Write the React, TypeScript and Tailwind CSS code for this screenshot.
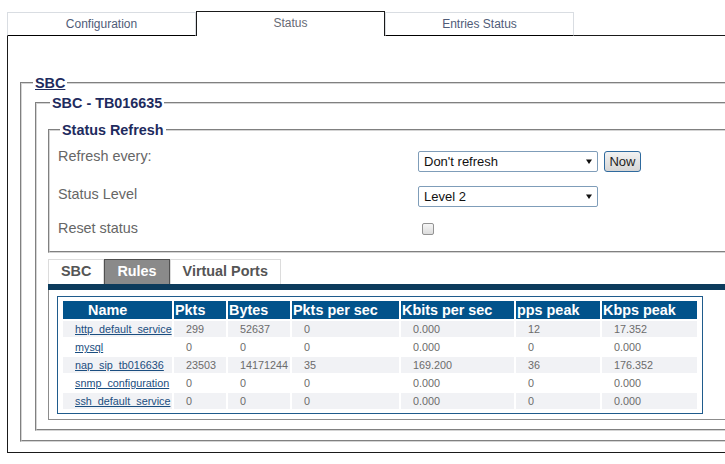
const rows = [
  ['http_default_service', '299', '52637', '0', '0.000', '12', '17.352'],
  ['mysql', '0', '0', '0', '0.000', '0', '0.000'],
  ['nap_sip_tb016636', '23503', '14171244', '35', '169.200', '36', '176.352'],
  ['snmp_configuration', '0', '0', '0', '0.000', '0', '0.000'],
  ['ssh_default_service', '0', '0', '0', '0.000', '0', '0.000'],
]

const headers = ['Pkts', 'Bytes', 'Pkts per sec', 'Kbits per sec', 'pps peak', 'Kbps peak']

function FakeSelect({ value }: { value: string }) {
  return (
    <div className="flex h-[21px] w-[180px] items-center justify-between rounded-[2px] border border-[#7f9db9] bg-white pl-[5px] pr-[5px] text-[13px] leading-[19px] text-[#111]">
      <span>{value}</span>
      <svg width="6" height="5" viewBox="0 0 6 5">
        <path d="M0 0.5h6L3 5z" fill="#111" />
      </svg>
    </div>
  )
}

function Legend({ children, className }: { children: React.ReactNode; className: string }) {
  return (
    <legend className={`px-[2px] text-[14.4px] font-bold leading-[18px] text-[#1e2b5e] ${className}`}>
      {children}
    </legend>
  )
}

function StatusRefresh() {
  return (
    <fieldset className="ml-[11px] border-2 border-[#d4d4d4] [border-style:groove] pl-[8px] pt-[8px]">
      <Legend className="ml-[2px]">Status Refresh</Legend>
      <div className="flex h-[38px]">
        <div className="w-[360px] text-[14.4px] leading-[18px] text-[#666]">Refresh every:</div>
        <div className="mt-[4px] flex items-start">
          <FakeSelect value="Don't refresh" />
          <button className="ml-[6px] h-[21px] w-[37px] rounded-[3px] border border-[#2f6a9e] bg-linear-to-b from-[#f2f2f2] to-[#d6d6d6] text-[13px] leading-[19px] text-[#222]">
            Now
          </button>
        </div>
      </div>
      <div className="flex h-[34px]">
        <div className="w-[360px] text-[14.4px] leading-[18px] text-[#666]">Status Level</div>
        <div className="mt-[1px]">
          <FakeSelect value="Level 2" />
        </div>
      </div>
      <div className="flex h-[32px]">
        <div className="w-[360px] text-[14.4px] leading-[18px] text-[#666]">Reset status</div>
        <div className="ml-[4px] mt-[4px] h-[12px] w-[12px] rounded-[2px] border border-[#939393] bg-linear-to-b from-[#f6f6f6] to-[#dcdcdc]" />
      </div>
    </fieldset>
  )
}

function RulesTable() {
  return (
    <div className="w-[646px] border border-[#1f5b8c] bg-white px-[3px] pb-[2px] pt-[2px]">
      <table className="w-[638px] table-fixed border-separate border-spacing-[2px]">
        <colgroup>
          <col className="w-[109px]" />
          <col className="w-[52px]" />
          <col className="w-[62px]" />
          <col className="w-[107px]" />
          <col className="w-[113px]" />
          <col className="w-[84px]" />
          <col className="w-[95px]" />
        </colgroup>
        <thead>
          <tr>
            <th className="h-[18px] bg-[#02538b] pl-[25px] text-left text-[14.4px] font-bold leading-[18px] text-white">
              Name
            </th>
            {headers.map((h) => (
              <th
                key={h}
                className="h-[18px] whitespace-nowrap bg-[#02538b] pl-px text-left text-[14.4px] font-bold leading-[18px] text-white"
              >
                {h}
              </th>
            ))}
          </tr>
        </thead>
        <tbody>
          {rows.map((r, i) => (
            <tr key={r[0]}>
              {r.map((c, j) => (
                <td
                  key={j}
                  className={`h-[16px] whitespace-nowrap pl-[12px] text-[10.8px] leading-[16px] ${
                    i % 2 === 0 ? 'bg-[#f1f2f5]' : 'bg-white'
                  } ${j === 0 ? 'text-[#1b4e80] underline' : 'text-[#6b6b6b]'}`}
                >
                  {c}
                </td>
              ))}
            </tr>
          ))}
        </tbody>
      </table>
    </div>
  )
}

function RulesPanel() {
  return (
    <div className="mt-[6px] ml-[11px]">
      <div className="flex items-end">
        <div className="flex h-[25px] items-center border border-b-0 border-[#dcdcdc] bg-white px-[12px] text-[14.4px] font-bold text-[#555]">
          SBC
        </div>
        <div className="flex h-[25px] items-center border border-b-0 border-[#505050] bg-[#8a8a8a] px-[12px] text-[14.4px] font-bold text-white">
          Rules
        </div>
        <div className="flex h-[25px] items-center border border-b-0 border-[#dcdcdc] bg-white px-[12px] text-[14.4px] font-bold text-[#555]">
          Virtual Ports
        </div>
      </div>
      <div className="h-[6px] bg-[#0c3b5c]" />
      <div className="border-b border-l border-[#8c8c8c] pb-[5px] pl-[8px] pt-[6px]">
        <RulesTable />
      </div>
    </div>
  )
}

export default function App() {
  return (
    <div className="h-[464px] w-[725px] overflow-hidden bg-white font-['Liberation_Sans',Arial,sans-serif]">
      <div className="ml-[7px] w-[780px] pt-[11px]">
        <div className="flex items-end">
          <div className="flex h-[24px] w-[189px] items-center justify-center border border-[#d9dde2] border-b-black text-[12px] text-[#4f5c77]">
            Configuration
          </div>
          <div className="flex h-[25px] w-[189px] items-center justify-center border border-b-0 border-[#1a1a1a] pb-[2px] text-[12px] text-[#666a75]">
            Status
          </div>
          <div className="flex h-[24px] w-[189px] items-center justify-center border border-[#d9dde2] border-b-black text-[12px] text-[#4f5c77]">
            Entries Status
          </div>
          <div className="h-px flex-1 bg-[#1a1a1a]" />
        </div>
        <div className="border-b border-l border-r border-[#1a1a1a] pb-[10px] pt-[38px]">
          <fieldset className="ml-[12px] mr-[20px] border-2 border-[#d4d4d4] [border-style:groove] pb-[9px]">
            <Legend className="ml-[11px] underline">SBC</Legend>
            <fieldset className="ml-[13px] mt-[2px] border-2 border-[#d4d4d4] [border-style:groove] pb-[9px]">
              <Legend className="ml-[13px]">SBC - TB016635</Legend>
              <div className="mt-[9px]">
                <StatusRefresh />
              </div>
              <RulesPanel />
            </fieldset>
          </fieldset>
        </div>
      </div>
    </div>
  )
}
